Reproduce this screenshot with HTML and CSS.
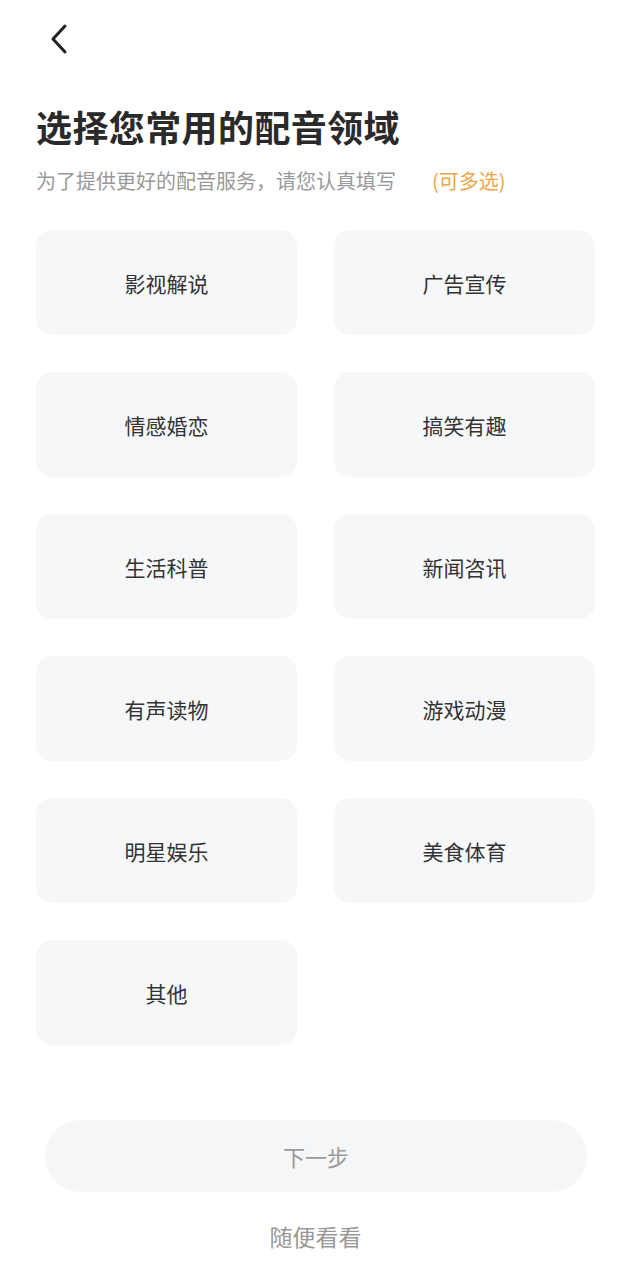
FILE: index.html
```html
<!DOCTYPE html>
<html lang="zh-CN">
<head>
    <meta charset="UTF-8">
    <meta name="viewport" content="width=device-width, initial-scale=1.0">
    <title>选择您常用的配音领域</title>
    <link rel="stylesheet" href="styles.css">
</head>
<body>
    <div class="page">
        <!-- 返回 -->
        <div class="top-bar">
            <svg class="back-icon" width="30" height="34" viewBox="0 0 30 34">
                <path d="M21 4 L9 17 L21 30" fill="none" stroke="#222" stroke-width="3" stroke-linecap="round" stroke-linejoin="round"/>
            </svg>
        </div>

        <h1 class="title">选择您常用的配音领域</h1>
        <p class="subtitle">为了提供更好的配音服务，请您认真填写<span class="multi">(可多选)</span></p>

        <div class="grid">
            <div class="card">影视解说</div>
            <div class="card">广告宣传</div>
            <div class="card">情感婚恋</div>
            <div class="card">搞笑有趣</div>
            <div class="card">生活科普</div>
            <div class="card">新闻咨讯</div>
            <div class="card">有声读物</div>
            <div class="card">游戏动漫</div>
            <div class="card">明星娱乐</div>
            <div class="card">美食体育</div>
            <div class="card">其他</div>
        </div>

        <div class="footer">
            <button class="next-btn">下一步</button>
            <div class="skip">随便看看</div>
        </div>
    </div>
</body>
</html>
```

FILE: styles.css
```css
body {
    margin: 0;
    padding: 0;
    background-color: #fff;
    font-family: "Noto Sans CJK SC", "Noto Sans", sans-serif;
}
.page {
    width: 630px;
    height: 1280px;
    box-sizing: border-box;
    padding: 0 35px 0 36px;
    display: flex;
    flex-direction: column;
}
.top-bar {
    height: 80px;
    display: flex;
    align-items: center;
}
.back-icon {
    margin-left: 8px;
    margin-top: -2px;
}
.title {
    margin: 22px 0 0 0;
    font-size: 36px;
    font-weight: bold;
    color: #2a2a2a;
    line-height: 48px;
    letter-spacing: 0.4px;
}
.subtitle {
    margin: 16px 0 0 0;
    font-size: 20px;
    line-height: 30px;
    color: #999;
}
.multi {
    color: #eea546;
    margin-left: 36px;
}
.grid {
    margin-top: 34px;
    display: grid;
    grid-template-columns: 1fr 1fr;
    column-gap: 37px;
    row-gap: 37px;
}
.card {
    height: 105px;
    border-radius: 16px;
    background-color: #f6f7f9;
    display: flex;
    align-items: center;
    justify-content: center;
    font-size: 21px;
    color: #333;
}
.footer {
    margin-top: 75px;
    display: flex;
    flex-direction: column;
    align-items: center;
}
.next-btn {
    width: 542px;
    height: 72px;
    border: none;
    border-radius: 36px;
    background-color: #f5f6f8;
    color: #999;
    font-family: inherit;
    font-size: 22px;
    margin-left: 1px;
}
.skip {
    margin-top: 28px;
    font-size: 23px;
    color: #999;
    line-height: 32px;
}
```
